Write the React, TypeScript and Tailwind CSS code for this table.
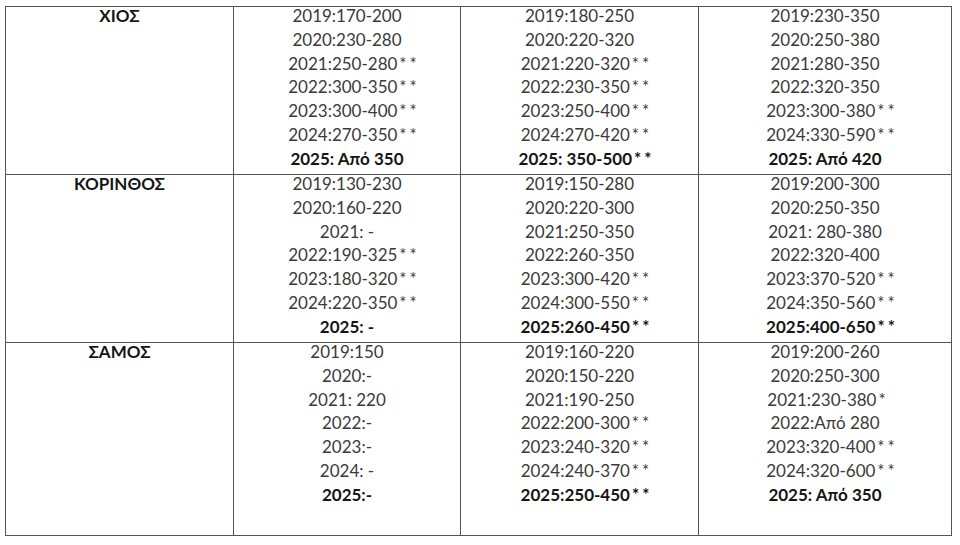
import type React from "react";

interface Row {
  region: string;
  height: string;
  cols: string[][];
}

// last entry of every column is the bold 2025 line
const rows: Row[] = [
  {
    region: "ΧΙΟΣ",
    height: "h-[168px]",
    cols: [
      ["2019:170-200", "2020:230-280", "2021:250-280**", "2022:300-350**", "2023:300-400**", "2024:270-350**", "2025: Από 350"],
      ["2019:180-250", "2020:220-320", "2021:220-320**", "2022:230-350**", "2023:250-400**", "2024:270-420**", "2025: 350-500**"],
      ["2019:230-350", "2020:250-380", "2021:280-350", "2022:320-350", "2023:300-380**", "2024:330-590**", "2025: Από 420"],
    ],
  },
  {
    region: "ΚΟΡΙΝΘΟΣ",
    height: "h-[168px]",
    cols: [
      ["2019:130-230", "2020:160-220", "2021: -", "2022:190-325**", "2023:180-320**", "2024:220-350**", "2025: -"],
      ["2019:150-280", "2020:220-300", "2021:250-350", "2022:260-350", "2023:300-420**", "2024:300-550**", "2025:260-450**"],
      ["2019:200-300", "2020:250-350", "2021: 280-380", "2022:320-400", "2023:370-520**", "2024:350-560**", "2025:400-650**"],
    ],
  },
  {
    region: "ΣΑΜΟΣ",
    height: "h-[193px]",
    cols: [
      ["2019:150", "2020:-", "2021: 220", "2022:-", "2023:-", "2024: -", "2025:-"],
      ["2019:160-220", "2020:150-220", "2021:190-250", "2022:200-300**", "2023:240-320**", "2024:240-370**", "2025:250-450**"],
      ["2019:200-260", "2020:250-300", "2021:230-380*", "2022:Από 280", "2023:320-400**", "2024:320-600**", "2025: Από 350"],
    ],
  },
];

// the asterisks hang past the centred figure, as in the source document
const Line: React.FC<{ text: string }> = ({ text }) => {
  const idx = text.indexOf("*");
  if (idx < 0) return <>{text}</>;
  const stars = text.slice(idx);
  return (
    <>
      {text.slice(0, idx)}
      <span className={`ml-[2px] tracking-[3px] ${stars.length > 1 ? "-mr-[14px]" : "-mr-[6px]"}`}>{stars}</span>
    </>
  );
};

const Cell: React.FC<{ lines: string[] }> = ({ lines }) => (
  <td className="border border-[#555] align-top p-0">
    <div className="-mt-[3px] flex flex-col items-center">
      {lines.map((line, i) => (
        <span
          key={line}
          className={`whitespace-nowrap ${i === lines.length - 1 ? "font-bold text-[#151515]" : "text-[#3a3a3a]"}`}
        >
          <Line text={line} />
        </span>
      ))}
    </div>
  </td>
);

const App: React.FC = () => {
  return (
    <div className="w-[960px] h-[545px] bg-white pl-[5px] pt-[6px] font-['Lato','Carlito','Liberation_Sans',sans-serif] text-[17px] leading-[23.75px]">
      <table className="border-collapse table-fixed w-[946px]">
        <colgroup>
          <col className="w-[228px]" />
          <col className="w-[227px]" />
          <col className="w-[238px]" />
          <col className="w-[253px]" />
        </colgroup>
        <tbody>
          {rows.map((row) => (
            <tr key={row.region} className={row.height}>
              <td className="border border-[#555] align-top p-0 text-center">
                <div className="-mt-[3px] font-bold text-[#151515]">{row.region}</div>
              </td>
              {row.cols.map((col, i) => (
                <Cell key={i} lines={col} />
              ))}
            </tr>
          ))}
        </tbody>
      </table>
    </div>
  );
};

export default App;
